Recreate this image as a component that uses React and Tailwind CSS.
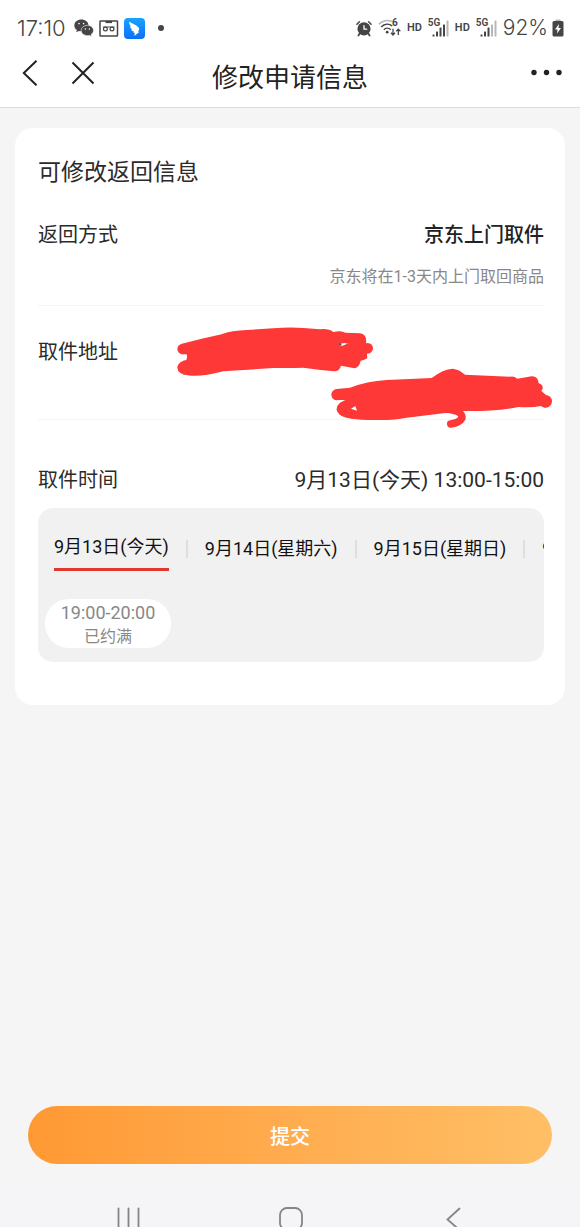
import { useState } from 'react';

const DAYS = ['9月13日(今天)', '9月14日(星期六)', '9月15日(星期日)', '9月16日(星期一)'];

const SLOTS = [{ time: '19:00-20:00', note: '已约满', full: true }];

const WechatIcon = () => (
    <svg width="20" height="18" viewBox="0 0 20 18" fill="#454545">
        <path d="M7.4 0.5C3.4 0.5 0.3 3.1 0.3 6.4c0 1.9 1 3.5 2.6 4.6l-.7 2.3 2.6-1.3c.8.2 1.7.3 2.6.3C11.3 12.3 14.5 9.7 14.5 6.4 14.5 3.1 11.3.5 7.4.5z" />
        <path
            d="M13.4 6.3c-3.4 0-6.2 2.3-6.2 5.2s2.8 5.2 6.2 5.2c.7 0 1.4-.1 2-.3l2.2 1.2-.6-2c1.5-.9 2.5-2.4 2.5-4.1 0-2.9-2.7-5.2-6.1-5.2z"
            stroke="#fff"
            strokeWidth="0.6"
        />
        <circle cx="5" cy="4.6" r="0.8" fill="#fff" />
        <circle cx="9.6" cy="4.6" r="0.8" fill="#fff" />
        <circle cx="11.4" cy="10" r="0.7" fill="#fff" />
        <circle cx="15.4" cy="10" r="0.7" fill="#fff" />
    </svg>
);

const RecorderIcon = () => (
    <svg width="20" height="17" viewBox="0 0 20 17" fill="none" stroke="#454545">
        <rect x="1" y="1" width="17.5" height="15" rx="0.6" strokeWidth="1.5" />
        <path d="M6.5 2h6.5" strokeWidth="2.2" />
        <circle cx="6.4" cy="9" r="1.9" strokeWidth="1.2" />
        <circle cx="13" cy="9" r="1.9" strokeWidth="1.2" />
        <path d="M3.8 7h11.8" strokeWidth="1" />
    </svg>
);

const BirdIcon = () => (
    <svg width="21" height="21" viewBox="0 0 21 21">
        <defs>
            <linearGradient id="bird" x1="0" y1="0" x2="0" y2="1">
                <stop offset="0" stopColor="#1ba3ff" />
                <stop offset="1" stopColor="#0a70f5" />
            </linearGradient>
        </defs>
        <rect width="21" height="21" rx="4" fill="url(#bird)" />
        <path
            d="M5.2 3.8c3 1.8 6.800 3.200 9 5.200.9.9 1.200 1.700.8 2.700l-1 2h1.500L10.300 18l.5-3.200H9.400l.5-1.300c-1.500-.2-2.400-.9-2.800-2l1.300.1C7 10.600 6.100 9.600 5.900 8.200l1.400.6C5.900 7.600 5 5.800 5.200 3.800z"
            fill="#fff"
        />
    </svg>
);

const AlarmIcon = () => (
    <svg width="16" height="17" viewBox="0 0 16 17" fill="none" stroke="#454545" strokeLinecap="round">
        <circle cx="8" cy="8.8" r="6.6" fill="#454545" stroke="none" />
        <path d="M0.9 4.2L3.4 1.7M15.1 4.2L12.6 1.7" strokeWidth="1.5" />
        <path d="M3.6 13.8L2.4 15.5M12.4 13.8l1.2 1.7" strokeWidth="1.8" />
        <path d="M8 5.6v3.6h2.7" stroke="#fff" strokeWidth="1.3" />
    </svg>
);

const WifiIcon = () => (
    <span className="relative block h-[18px] w-[23px]">
        <svg width="23" height="18" viewBox="0 0 23 18" fill="none" stroke="#454545">
            <path d="M0.8 5.2C4.5 1.3 10 0.6 14 2.6" stroke="#b5b5b5" strokeWidth="1.5" />
            <path d="M3.2 8C6.5 4.7 11 4.5 14.3 7" strokeWidth="1.5" />
            <path d="M5.8 10.7c2-1.9 5-1.9 7 0" strokeWidth="1.5" />
            <circle cx="9.2" cy="13.2" r="1.4" fill="#454545" stroke="none" />
            <path d="M15 9.8v6M13 13.8l2 2.2 2-2.2M20.3 16v-5.5M18.3 12.3l2-2.2 2 2.2" strokeWidth="1.3" />
        </svg>
        <span className="absolute top-0 left-[14px] text-[10px] leading-[8px] font-bold">6</span>
    </span>
);

const SignalIcon = ({ bars }) => (
    <span className="relative block h-[18px] w-[21px]">
        <svg width="21" height="18" viewBox="0 0 21 18">
            {[2, 5, 9, 12, 16].map((height, i) => (
                <rect
                    key={height}
                    x={4.5 + i * 3.5}
                    y={17.5 - height}
                    width="2"
                    height={height}
                    rx="0.5"
                    fill={i < bars ? '#454545' : '#b8b8b8'}
                />
            ))}
        </svg>
        <span className="absolute top-0 left-0 text-[10px] leading-[8px] font-semibold">5G</span>
    </span>
);

const BatteryIcon = () => (
    <svg width="12" height="18" viewBox="0 0 12 18">
        <path d="M3.5 0.5h5v2h-5z" fill="#b5b5b5" />
        <rect x="0.5" y="2" width="11" height="15.5" rx="1.5" fill="#454545" />
        <path d="M7 5L3 10.5h2.5L5 14.5 9 9H6.5z" fill="#fff" />
    </svg>
);

const StatusBar = () => (
    <div className="flex h-11 items-center justify-between bg-white px-4 pt-3 font-['Roboto',sans-serif] text-[#454545]">
        <div className="flex items-center gap-[5px]">
            <span className="mr-[3px] pl-px font-['Inter',sans-serif] text-[22px] leading-6 font-light">17:10</span>
            <WechatIcon />
            <RecorderIcon />
            <BirdIcon />
            <span className="ml-2 size-1.5 rounded-full bg-[#454545]" />
        </div>
        <div className="flex items-center gap-1.5">
            <AlarmIcon />
            <WifiIcon />
            <span className="text-[11px] leading-4 font-semibold">HD</span>
            <SignalIcon bars={4} />
            <span className="text-[11px] leading-4 font-semibold">HD</span>
            <SignalIcon bars={3} />
            <span className="flex items-center gap-1">
                <span className="font-['Inter',sans-serif] text-[21px] leading-6 font-light">92%</span>
                <BatteryIcon />
            </span>
        </div>
    </div>
);

const Header = () => (
    <header className="grid h-16 grid-cols-[1fr_auto_1fr] items-start border-b border-[#dcdcdc] bg-white px-4 pt-4">
        <div className="flex items-center gap-8 pl-1.5">
            <button type="button" aria-label="返回">
                <svg width="17" height="26" viewBox="0 0 17 26" fill="none" stroke="#222" strokeWidth="2">
                    <path d="M14.5 0.8L1.8 13l12.7 12.2" />
                </svg>
            </button>
            <button type="button" aria-label="关闭">
                <svg width="24" height="26" viewBox="0 0 24 26" fill="none" stroke="#222" strokeWidth="2">
                    <path d="M1.5 2.5l21 21M22.5 2.5l-21 21" />
                </svg>
            </button>
        </div>
        <h1 className="text-[26px] leading-9 text-[#222]">修改申请信息</h1>
        <button type="button" aria-label="更多" className="justify-self-end">
            <svg width="34" height="26" viewBox="0 0 34 26" fill="#222">
                <circle cx="4" cy="12.5" r="2.7" />
                <circle cx="16.5" cy="12.5" r="2.7" />
                <circle cx="29" cy="12.5" r="2.7" />
            </svg>
        </button>
    </header>
);

// Marker strokes hiding the pickup address
const AddressMask = () => (
    <svg
        width="384"
        height="110"
        viewBox="30 30 1152 330"
        fill="#fe3737"
        className="absolute top-[14px] -right-[10px]"
        aria-hidden="true"
    >
        <path d="M66 101L125 86L185 73Q215 61 260 60L340 55Q390 50 430 54L480 58Q505 55 520 66Q545 60 556 68L600 70Q622 72 618 102L622 145Q610 152 602 152Q598 172 584 175L543 167Q538 185 522 184Q480 180 430 173Q350 175 340 174L190 184Q120 202 85 196L70 158Q85 148 80 133L66 133Z" />
        <circle cx="68" cy="117" r="16" />
        <circle cx="623" cy="115" r="16" />
        <ellipse cx="84" cy="173" rx="32" ry="23" />
        <path d="M534 104Q548 97 566 100L548 107z" fill="#fff" />
        <path d="M534 105l8-5 3 4zM556 102l9-2-5 3z" fill="#333" />
        <path d="M530 237L570 233Q620 214 680 210Q750 207 815 204Q850 177 878 176Q898 178 915 194L1050 200Q1062 197 1072 206L1115 199Q1134 198 1136 220Q1150 224 1148 236L1144 243L1158 255L1156 293L1142 288Q1120 293 1075 291Q1010 304 910 303L850 310L740 323Q700 332 640 330Q565 330 540 314Q522 294 540 278L556 270L530 270Z" />
        <circle cx="531" cy="254" r="17" />
        <circle cx="1157" cy="274" r="19" />
        <ellipse cx="585" cy="298" rx="55" ry="28" />
        <path d="M860 298Q908 302 906 324Q899 338 872 342" fill="none" stroke="#fe3737" strokeWidth="22" strokeLinecap="round" />
        <path d="M573 296l13-8 5 14z" fill="#fff" />
    </svg>
);

const DayTabs = ({ selected, onSelect }) => (
    <div className="flex h-9 items-start gap-[17px] overflow-x-auto overflow-y-hidden pl-4 text-[18px] whitespace-nowrap text-[#111] [scrollbar-width:none]">
        {DAYS.map((day, i) => (
            <div key={day} className="flex shrink-0 items-start gap-[17px]">
                {i > 0 && <span className="mt-[5px] h-[18px] w-0.5 bg-[#dedede]" />}
                <button
                    type="button"
                    onClick={() => onSelect(i)}
                    className={i === selected ? 'h-9 border-b-[3px] border-[#e1372c] pb-[9px] leading-6' : 'leading-7'}
                >
                    {day}
                </button>
            </div>
        ))}
    </div>
);

const NavBar = () => (
    <nav className="grid h-10 grid-cols-[1fr_auto_1fr] items-start overflow-hidden bg-[#f5f5f8] pt-5">
        <button type="button" aria-label="最近任务" className="mr-[137px] justify-self-end">
            <svg width="24" height="24" viewBox="0 0 24 24" stroke="#858585" strokeWidth="1.8" strokeLinecap="round">
                <path d="M2.5 1.5v21M12.5 1.5v21M22.5 1.5v21" />
            </svg>
        </button>
        <button type="button" aria-label="主页">
            <svg width="26" height="24" viewBox="0 0 26 24" fill="none" stroke="#858585" strokeWidth="1.8">
                <rect x="3" y="1" width="22" height="22" rx="7" />
            </svg>
        </button>
        <button type="button" aria-label="后退" className="ml-[142px] justify-self-start">
            <svg width="17" height="24" viewBox="0 0 17 24" fill="none" stroke="#858585" strokeWidth="1.8" strokeLinecap="round">
                <path d="M14.5 1.5L2.5 12.5l12 10.5" />
            </svg>
        </button>
    </nav>
);

const App = () => {
    const [selectedDay, setSelectedDay] = useState(0);

    const handleSubmit = (e) => {
        e.preventDefault();
    };

    return (
        <div className="flex min-h-screen flex-col bg-[#f5f5f5] font-['Roboto','Noto_Sans_CJK_SC',sans-serif] text-[#2b2b2b]">
            <StatusBar />
            <Header />

            <form onSubmit={handleSubmit} className="flex flex-1 flex-col justify-between pt-5 pb-[23px]">
                <section className="mx-[15px] rounded-[18px] bg-white pt-[29px] pr-[21px] pb-[43px] pl-[23px]">
                    <h2 className="text-[23px] leading-8">可修改返回信息</h2>

                    <div className="mt-8 border-b border-[#f4f4f4] pb-4">
                        <div className="flex items-center justify-between text-[20px] leading-7">
                            <span>返回方式</span>
                            <span className="font-medium text-[#222]">京东上门取件</span>
                        </div>
                        <p className="mt-4 text-right text-[16px] leading-6 text-[#888]">京东将在1-3天内上门取回商品</p>
                    </div>

                    <div className="relative h-[114px] border-b border-[#f4f4f4] pt-8 text-[20px] leading-7">
                        <span>取件地址</span>
                        <AddressMask />
                    </div>

                    <div className="flex items-center justify-between pt-[46px] leading-7">
                        <span className="text-[20px]">取件时间</span>
                        <span className="text-[21px]">9月13日(今天) 13:00-15:00</span>
                    </div>

                    <div className="mt-3.5 overflow-hidden rounded-[15px] bg-[#f1f1f1] pt-[27px] pb-3.5">
                        <DayTabs selected={selectedDay} onSelect={setSelectedDay} />
                        <div className="mt-7 flex gap-2 px-[7px]">
                            {SLOTS.map((slot) => (
                                <button
                                    key={slot.time}
                                    type="button"
                                    disabled={slot.full}
                                    className="flex w-[126px] flex-col items-center rounded-3xl bg-white pt-px text-[#888]"
                                >
                                    <span className="text-[18px] leading-[25px]">{slot.time}</span>
                                    <span className="text-[16px] leading-[23px]">{slot.note}</span>
                                </button>
                            ))}
                        </div>
                    </div>
                </section>

                <button
                    type="submit"
                    className="mx-7 h-[58px] rounded-full bg-linear-to-r from-[#ff9933] to-[#ffbf66] pt-1 text-[20px] font-medium text-white"
                >
                    提交
                </button>
            </form>

            <NavBar />
        </div>
    );
};

export default App;
